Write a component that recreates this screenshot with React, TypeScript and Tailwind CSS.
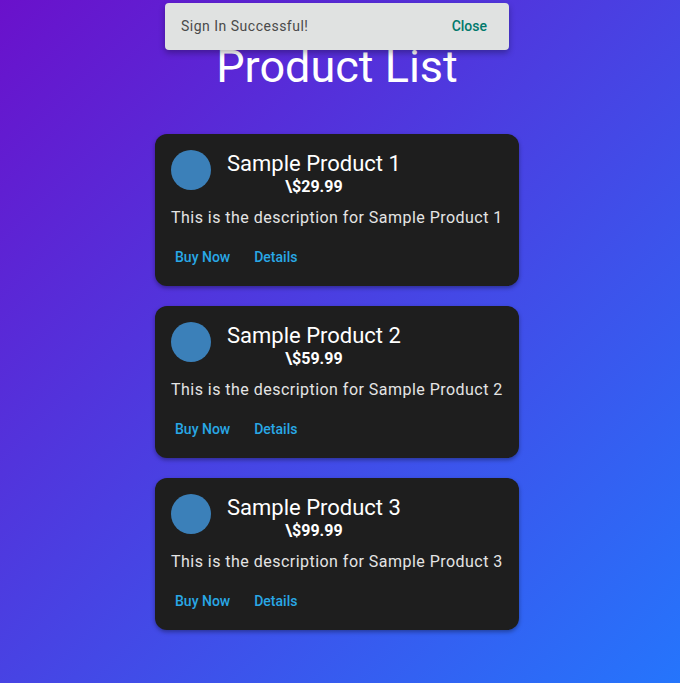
import React from 'react';

interface Product {
  id: number;
  name: string;
  price: string;
}

const products: Product[] = [
  { id: 1, name: 'Sample Product 1', price: '29.99' },
  { id: 2, name: 'Sample Product 2', price: '59.99' },
  { id: 3, name: 'Sample Product 3', price: '99.99' },
];

const ProductCard = ({ product }: { product: Product }) => {
  return (
    <div className="w-[364px] rounded-xl bg-[#1e1e1e] shadow-[0_2px_4px_rgba(0,0,0,0.35)] text-white">
      <div className="px-4 pt-4 pb-0">
        <div className="flex items-start">
          <div className="w-10 h-10 rounded-full bg-[#3b80b9] shrink-0" />
          <div className="ml-4 flex flex-col items-center">
            <h2 className="text-[22px] leading-[26px] pt-[1px]">{product.name}</h2>
            <p className="text-[16px] leading-[20px] font-bold">\${product.price}</p>
          </div>
        </div>
        <p className="mt-[9px] text-[16px] leading-6 text-[#e4e4e4] tracking-[0.47px]">
          This is the description for {product.name}
        </p>
      </div>
      <div className="flex items-center px-3 pt-[9px] pb-[11px]">
        <button className="px-2 h-9 text-[14px] font-medium text-[#29a8e6]">Buy Now</button>
        <button className="ml-2 px-2 h-9 text-[14px] font-medium text-[#29a8e6]">Details</button>
      </div>
    </div>
  );
};

const App = () => {
  return (
    <div
      className="relative min-h-[683px] w-full bg-linear-to-br/srgb from-[#6a11cb] to-[#2575fc] pr-[6px]"
      style={{ fontFamily: 'Roboto, "Liberation Sans", sans-serif' }}
    >
      <div className="flex flex-col items-center pt-[38px]">
        <h1 className="text-[45px] leading-[58px] text-white">Product List</h1>
        <div className="mt-[38px] flex flex-col gap-5">
          {products.map(p => (
            <ProductCard key={p.id} product={p} />
          ))}
        </div>
      </div>

      {/* Snackbar */}
      <div className="absolute top-[3px] left-[165px] w-[344px] h-[47px] rounded bg-[#e0e2e1] shadow-[0_3px_6px_rgba(0,0,0,0.3)] flex items-center justify-between pl-4 pr-[14px]">
        <span className="text-[14px] text-[#4a4a4a] tracking-[0.5px]">Sign In Successful!</span>
        <button className="px-2 h-9 text-[14px] font-medium text-[#00796b]">Close</button>
      </div>
    </div>
  );
};

export default App;
